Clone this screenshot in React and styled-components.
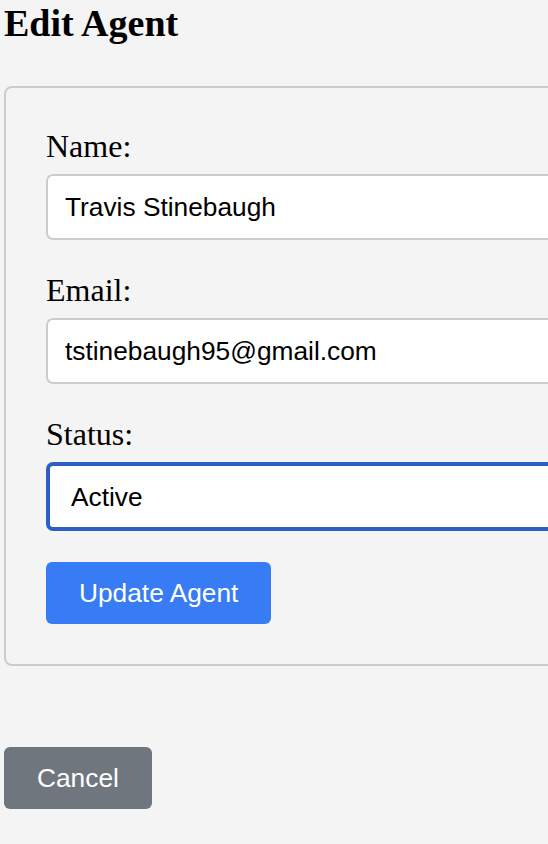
import React, { useState } from 'react'
import styled, { createGlobalStyle } from 'styled-components'

const GlobalStyle = createGlobalStyle`
  html, body {
    margin: 0;
    padding: 0;
    background: #f4f4f4;
    overflow-x: hidden;
  }
`

const Page = styled.div`
  padding: 1px 4px 0;
  width: 660px;
  box-sizing: border-box;
`
const Heading = styled.h1`
  margin: 0 0 41px;
  font-family: 'Liberation Serif', 'Times New Roman', serif;
  font-size: 38px;
  line-height: 44px;
  font-weight: bold;
  color: #000;
`
const Card = styled.form`
  display: flex;
  flex-direction: column;
  align-items: flex-start;
  border: 2px solid #cccccc;
  border-radius: 8px;
  padding: 40px;
  margin-bottom: 81px;
`
const Field = styled.div`
  display: flex;
  flex-direction: column;
  align-self: stretch;
  margin-bottom: 32px;

  &:last-of-type {
    margin-bottom: 31px;
  }
`
const Label = styled.label`
  font-family: 'Liberation Serif', 'Times New Roman', serif;
  font-size: 32px;
  line-height: 36px;
  color: #000;
  margin-bottom: 10px;
`
const Input = styled.input`
  height: 66px;
  box-sizing: border-box;
  border: 2px solid #cccccc;
  border-radius: 7px;
  background: #fff;
  padding: 0 17px;
  font-family: 'Liberation Sans', Arial, sans-serif;
  font-size: 26.3px;
  color: #000;
  outline: none;
`
const Select = styled.select`
  appearance: none;
  height: 69px;
  box-sizing: border-box;
  border: 4px solid #2c5fc6;
  border-radius: 7px;
  background: #fff;
  padding: 0 21px;
  font-family: 'Liberation Sans', Arial, sans-serif;
  font-size: 26.3px;
  color: #000;
  outline: none;
`
const Button = styled.button`
  height: 62px;
  box-sizing: border-box;
  border: none;
  border-radius: 6px;
  padding: 0 33px;
  background: ${props => (props.secondary ? '#6f767e' : '#377bf5')};
  color: #fff;
  font-family: 'Liberation Sans', Arial, sans-serif;
  font-size: 26.3px;
  cursor: pointer;
`

const App = () => {
  const [name, setName] = useState('Travis Stinebaugh')
  const [email, setEmail] = useState('tstinebaugh95@gmail.com')
  const [status, setStatus] = useState('Active')

  return (
    <>
      <GlobalStyle />
      <Page>
        <Heading>Edit Agent</Heading>
        <Card onSubmit={e => e.preventDefault()}>
          <Field>
            <Label htmlFor='name'>Name:</Label>
            <Input
              id='name'
              value={name}
              onChange={e => setName(e.target.value)}
            />
          </Field>
          <Field>
            <Label htmlFor='email'>Email:</Label>
            <Input
              id='email'
              value={email}
              onChange={e => setEmail(e.target.value)}
            />
          </Field>
          <Field>
            <Label htmlFor='status'>Status:</Label>
            <Select
              id='status'
              value={status}
              onChange={e => setStatus(e.target.value)}
            >
              <option>Active</option>
              <option>Inactive</option>
            </Select>
          </Field>
          <Button type='submit'>Update Agent</Button>
        </Card>
        <Button secondary type='button'>
          Cancel
        </Button>
      </Page>
    </>
  )
}

export default App
